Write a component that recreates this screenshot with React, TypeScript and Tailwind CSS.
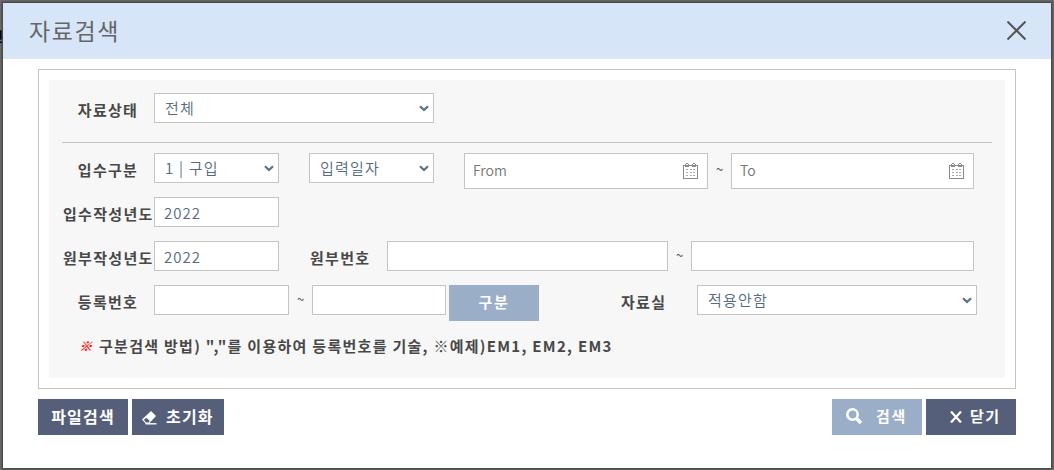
import type { ReactNode } from "react";

const field = "h-[30px] shrink-0 border border-[#c4c4c4] bg-white text-[#55697f]";

function Label({ children, className = "" }: { children: ReactNode; className?: string }) {
  return (
    <label className={`shrink-0 whitespace-nowrap pt-[7px] text-[15px] leading-5 font-bold tracking-[1.3px] text-[#484848] ${className}`}>
      {children}
    </label>
  );
}

function Select({ value, className }: { value: string; className: string }) {
  return (
    <div className={`relative ${field} ${className}`}>
      <select className="block h-full w-full appearance-none bg-transparent pl-[10px] text-[15px] font-[350] tracking-[1.2px] outline-none">
        <option>{value}</option>
      </select>
      <svg className="absolute top-[11px] right-1" width="10" height="7" viewBox="0 0 10 7" fill="none">
        <path d="M1 1.2 5 5 9 1.2" stroke="#5d7085" strokeWidth="2.2" />
      </svg>
    </div>
  );
}

function Input({ value, className }: { value?: string; className: string }) {
  return (
    <input
      defaultValue={value}
      className={`${field} pl-[9px] text-[15px] font-[350] tracking-[1px] outline-none ${className}`}
    />
  );
}

function DateInput({ placeholder, className }: { placeholder: string; className: string }) {
  return (
    <div className={`flex h-9 shrink-0 items-center border border-[#c4c4c4] bg-white pr-[9px] pl-2 ${className}`}>
      <input
        placeholder={placeholder}
        className="min-w-0 flex-1 pb-[2px] text-[14px] font-[350] outline-none placeholder:text-[#757575]"
      />
      <svg width="15" height="16" viewBox="0 0 15 16" fill="none" shapeRendering="crispEdges">
        <path d="M.5 2.5V15.500H14.500V2.500M0 2.500H15" stroke="#8a8a8a" />
        <path d="M2.500 1V4M5.500 1V4M9.500 1V4M12.500 1V4M3 .5H5M10 .5H12M3 3.500H5M10 3.500H12" stroke="#8a8a8a" />
        <path d="M3 6.500H13M3 9.500H13M3 12.500H13" stroke="#aaa" strokeWidth="1.500" strokeDasharray="2 1.500" />
      </svg>
    </div>
  );
}

function Tilde({ className = "pt-1" }: { className?: string }) {
  return <span className={`w-[23px] shrink-0 text-center text-[13px] leading-5 text-[#555] ${className}`}>~</span>;
}

const button = "flex h-9 items-center pb-[2px] font-bold whitespace-nowrap text-white";

export default function App() {
  return (
    <div className="relative h-[470px] w-[1054px] overflow-hidden bg-[#6b6b69] pt-[3px] pl-[3px] font-['Noto_Sans_CJK_KR',sans-serif]">
      {/* page text showing past the dialog edge */}
      <span className="absolute top-7 right-[1051px] text-[13px] leading-4 font-bold text-black">전</span>
      <div className="relative h-[465px] w-[1048px] bg-white shadow-[0_0_2px_1px_#3a3a3a]">
        <header className="flex h-14 items-center justify-between border-b border-[#e2e6ec] bg-[#d6e5f8] pr-[25px] pl-[26px]">
          <h1 className="pb-[2px] text-[23px] leading-8 tracking-[1.6px] text-[#666]">자료검색</h1>
          <svg width="19" height="19" viewBox="0 0 19 19" stroke="#555" strokeWidth="2">
            <path d="M.5.5 18.500 18.500M18.500.5.5 18.500" />
          </svg>
        </header>

        <main className="px-[35px] pt-[10px]">
          <section className="h-80 w-[978px] border border-[#c4c4c4] p-[10px]">
            <div className="h-[298px] bg-[#f7f7f7] px-[13px] pt-[13px]">
              <div className="flex h-[50px] border-b border-[#c4c4c4]">
                <Label className="w-[92px] text-center">자료상태</Label>
                <Select value="전체" className="w-[280px]" />
              </div>
              <div className="mt-[10px] flex h-11">
                <Label className="w-[92px] text-center">입수구분</Label>
                <Select value="1 | 구입" className="w-[125px]" />
                <Select value="입력일자" className="ml-[30px] w-[125px]" />
                <DateInput placeholder="From" className="ml-[30px] w-[244px]" />
                <Tilde className="pt-[6px]" />
                <DateInput placeholder="To" className="w-[243px]" />
              </div>
              <div className="flex h-11">
                <Label className="w-[92px] pl-px">입수작성년도</Label>
                <Input value="2022" className="w-[125px]" />
              </div>
              <div className="flex h-11">
                <Label className="w-[92px] pl-px">원부작성년도</Label>
                <Input value="2022" className="w-[125px]" />
                <Label className="ml-[31px] w-[77px]">원부번호</Label>
                <Input className="w-[281px]" />
                <Tilde />
                <Input className="w-[283px]" />
              </div>
              <div className="flex h-11">
                <Label className="w-[92px] text-center">등록번호</Label>
                <Input className="w-[135px]" />
                <Tilde />
                <Input className="w-[134px]" />
                <button className={`${button} ml-[3px] w-[90px] justify-center bg-[#9baec8] text-[15px] tracking-[1.8px]`}>구분</button>
                <Label className="ml-[82px] w-[76px]">자료실</Label>
                <Select value="적용안함" className="w-[280px]" />
              </div>
              <p className="flex pt-[7px] pl-[17px] text-[15px] leading-5 font-bold whitespace-nowrap text-[#484848]">
                <em className="w-5 text-[13px] text-[#ff1a1a] [text-shadow:0.5px_0_#ff1a1a]">※</em>
                <span className="tracking-[1.28px]">구분검색 방법) ","를 이용하여 등록번호를 기술, ※예제)EM1, EM2, EM3</span>
              </p>
            </div>
          </section>

          <footer className="mt-[10px] flex w-[978px] justify-between">
            <div className="flex gap-1">
              <button className={`${button} w-[90px] justify-center bg-[#555f7a] text-[16px] tracking-[1.2px]`}>파일검색</button>
              <button className={`${button} w-[92px] bg-[#555f7a] pl-[10px] text-[16px] tracking-[1.2px]`}>
                <svg className="mt-1 mr-[9px] shrink-0" width="15" height="14" viewBox="0 0 15 14">
                  <path d="M9 0 14 5 7 12.500H3.500L0 8.500Z" fill="#fff" />
                  <path d="M4.500 6.800 7.800 10.100 6.500 11.400H4L1.800 8.700Z" fill="#555f7a" />
                  <path d="M3.500 12.800H14.500" stroke="#fff" strokeWidth="1.400" />
                </svg>
                초기화
              </button>
            </div>
            <div className="flex gap-1">
              <button className={`${button} w-[90px] bg-[#9baec8] pl-[14px] text-[15px] tracking-[1.6px]`}>
                <svg className="mr-[14px] shrink-0" width="16" height="16" viewBox="0 0 16 16" fill="none" stroke="#fff">
                  <circle cx="6.500" cy="6.500" r="5.200" strokeWidth="2.600" />
                  <path d="m10.500 10.500 4.500 4.500" strokeWidth="3.400" />
                </svg>
                검색
              </button>
              <button className={`${button} w-[90px] bg-[#555f7a] pl-6 text-[15px] tracking-[1.4px]`}>
                <svg className="mt-px mr-2 shrink-0" width="12" height="12" viewBox="0 0 12 12" stroke="#fff" strokeWidth="2.200">
                  <path d="M1 .5 11 11.500M11 .5 1 11.500" />
                </svg>
                닫기
              </button>
            </div>
          </footer>
        </main>
      </div>
    </div>
  );
}
